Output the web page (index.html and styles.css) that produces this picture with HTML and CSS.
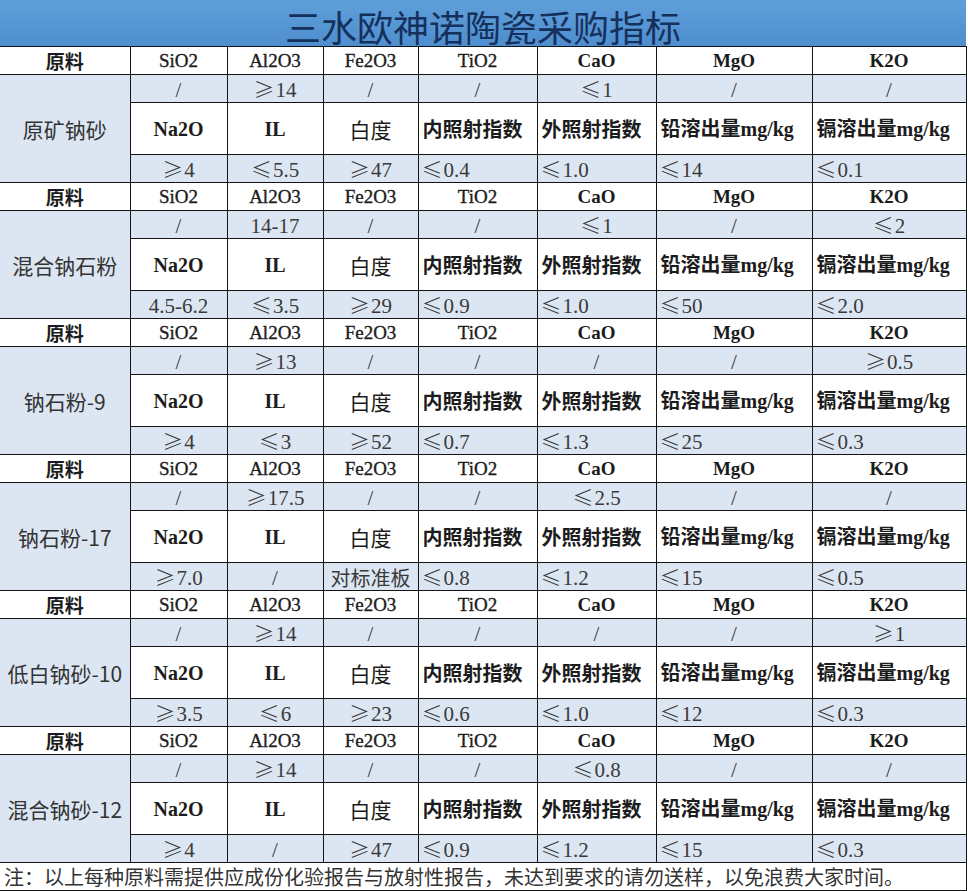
FILE: index.html
```html
<!DOCTYPE html>
<html lang="zh-CN">
<head>
<meta charset="utf-8">
<title>三水欧神诺陶瓷采购指标</title>
<link rel="stylesheet" href="styles.css">
</head>
<body>
<div class="sheet">
  <div class="title">三水欧神诺陶瓷采购指标</div>
  <table class="grid">
    <colgroup>
      <col class="c-name"><col class="c1"><col class="c2"><col class="c3"><col class="c4"><col class="c5"><col class="c6"><col class="c7">
    </colgroup>
    <tbody>
      <!-- block 1 -->
      <tr class="hd"><td class="cjk">原料</td><td>SiO2</td><td>Al2O3</td><td>Fe2O3</td><td>TiO2</td><td class="tb">CaO</td><td class="tb">MgO</td><td class="tb">K2O</td></tr>
      <tr class="sl"><td class="name" rowspan="3">原矿钠砂</td><td>/</td><td><span class="sg">≥</span>14</td><td>/</td><td>/</td><td><span class="sg">≤</span>1</td><td>/</td><td>/</td></tr>
      <tr class="lb"><td class="en">Na2O</td><td class="en">IL</td><td class="wd">白度</td><td class="bd">内照射指数</td><td class="bd">外照射指数</td><td class="bd">铅溶出量<span class="en">mg/kg</span></td><td class="bd">镉溶出量<span class="en">mg/kg</span></td></tr>
      <tr class="vl"><td><span class="sg">≥</span>4</td><td><span class="sg">≤</span>5.5</td><td><span class="sg">≥</span>47</td><td class="l"><span class="sg">≤</span>0.4</td><td class="l"><span class="sg">≤</span>1.0</td><td class="l"><span class="sg">≤</span>14</td><td class="l"><span class="sg">≤</span>0.1</td></tr>
      <!-- block 2 -->
      <tr class="hd"><td class="cjk">原料</td><td>SiO2</td><td>Al2O3</td><td>Fe2O3</td><td>TiO2</td><td class="tb">CaO</td><td class="tb">MgO</td><td class="tb">K2O</td></tr>
      <tr class="sl"><td class="name" rowspan="3">混合钠石粉</td><td>/</td><td>14-17</td><td>/</td><td>/</td><td><span class="sg">≤</span>1</td><td>/</td><td><span class="sg">≤</span>2</td></tr>
      <tr class="lb"><td class="en">Na2O</td><td class="en">IL</td><td class="wd">白度</td><td class="bd">内照射指数</td><td class="bd">外照射指数</td><td class="bd">铅溶出量<span class="en">mg/kg</span></td><td class="bd">镉溶出量<span class="en">mg/kg</span></td></tr>
      <tr class="vl"><td>4.5-6.2</td><td><span class="sg">≤</span>3.5</td><td><span class="sg">≥</span>29</td><td class="l"><span class="sg">≤</span>0.9</td><td class="l"><span class="sg">≤</span>1.0</td><td class="l"><span class="sg">≤</span>50</td><td class="l"><span class="sg">≤</span>2.0</td></tr>
      <!-- block 3 -->
      <tr class="hd"><td class="cjk">原料</td><td>SiO2</td><td>Al2O3</td><td>Fe2O3</td><td>TiO2</td><td class="tb">CaO</td><td class="tb">MgO</td><td class="tb">K2O</td></tr>
      <tr class="sl"><td class="name" rowspan="3">钠石粉-9</td><td>/</td><td><span class="sg">≥</span>13</td><td>/</td><td>/</td><td>/</td><td>/</td><td><span class="sg">≥</span>0.5</td></tr>
      <tr class="lb"><td class="en">Na2O</td><td class="en">IL</td><td class="wd">白度</td><td class="bd">内照射指数</td><td class="bd">外照射指数</td><td class="bd">铅溶出量<span class="en">mg/kg</span></td><td class="bd">镉溶出量<span class="en">mg/kg</span></td></tr>
      <tr class="vl"><td><span class="sg">≥</span>4</td><td><span class="sg">≤</span>3</td><td><span class="sg">≥</span>52</td><td class="l"><span class="sg">≤</span>0.7</td><td class="l"><span class="sg">≤</span>1.3</td><td class="l"><span class="sg">≤</span>25</td><td class="l"><span class="sg">≤</span>0.3</td></tr>
      <!-- block 4 -->
      <tr class="hd"><td class="cjk">原料</td><td>SiO2</td><td>Al2O3</td><td>Fe2O3</td><td>TiO2</td><td class="tb">CaO</td><td class="tb">MgO</td><td class="tb">K2O</td></tr>
      <tr class="sl"><td class="name" rowspan="3">钠石粉-17</td><td>/</td><td><span class="sg">≥</span>17.5</td><td>/</td><td>/</td><td><span class="sg">≤</span>2.5</td><td>/</td><td>/</td></tr>
      <tr class="lb"><td class="en">Na2O</td><td class="en">IL</td><td class="wd">白度</td><td class="bd">内照射指数</td><td class="bd">外照射指数</td><td class="bd">铅溶出量<span class="en">mg/kg</span></td><td class="bd">镉溶出量<span class="en">mg/kg</span></td></tr>
      <tr class="vl"><td><span class="sg">≥</span>7.0</td><td>/</td><td class="cj">对标准板</td><td class="l"><span class="sg">≤</span>0.8</td><td class="l"><span class="sg">≤</span>1.2</td><td class="l"><span class="sg">≤</span>15</td><td class="l"><span class="sg">≤</span>0.5</td></tr>
      <!-- block 5 -->
      <tr class="hd"><td class="cjk">原料</td><td>SiO2</td><td>Al2O3</td><td>Fe2O3</td><td>TiO2</td><td class="tb">CaO</td><td class="tb">MgO</td><td class="tb">K2O</td></tr>
      <tr class="sl"><td class="name" rowspan="3">低白钠砂-10</td><td>/</td><td><span class="sg">≥</span>14</td><td>/</td><td>/</td><td>/</td><td>/</td><td><span class="sg">≥</span>1</td></tr>
      <tr class="lb"><td class="en">Na2O</td><td class="en">IL</td><td class="wd">白度</td><td class="bd">内照射指数</td><td class="bd">外照射指数</td><td class="bd">铅溶出量<span class="en">mg/kg</span></td><td class="bd">镉溶出量<span class="en">mg/kg</span></td></tr>
      <tr class="vl"><td><span class="sg">≥</span>3.5</td><td><span class="sg">≤</span>6</td><td><span class="sg">≥</span>23</td><td class="l"><span class="sg">≤</span>0.6</td><td class="l"><span class="sg">≤</span>1.0</td><td class="l"><span class="sg">≤</span>12</td><td class="l"><span class="sg">≤</span>0.3</td></tr>
      <!-- block 6 -->
      <tr class="hd"><td class="cjk">原料</td><td>SiO2</td><td>Al2O3</td><td>Fe2O3</td><td>TiO2</td><td class="tb">CaO</td><td class="tb">MgO</td><td class="tb">K2O</td></tr>
      <tr class="sl"><td class="name" rowspan="3">混合钠砂-12</td><td>/</td><td><span class="sg">≥</span>14</td><td>/</td><td>/</td><td><span class="sg">≤</span>0.8</td><td>/</td><td>/</td></tr>
      <tr class="lb"><td class="en">Na2O</td><td class="en">IL</td><td class="wd">白度</td><td class="bd">内照射指数</td><td class="bd">外照射指数</td><td class="bd">铅溶出量<span class="en">mg/kg</span></td><td class="bd">镉溶出量<span class="en">mg/kg</span></td></tr>
      <tr class="vl"><td><span class="sg">≥</span>4</td><td>/</td><td><span class="sg">≥</span>47</td><td class="l"><span class="sg">≤</span>0.9</td><td class="l"><span class="sg">≤</span>1.2</td><td class="l"><span class="sg">≤</span>15</td><td class="l"><span class="sg">≤</span>0.3</td></tr>
      <!-- note -->
      <tr class="nt"><td colspan="8">注：以上每种原料需提供应成份化验报告与放射性报告，未达到要求的请勿送样，以免浪费大家时间。</td></tr>
    </tbody>
  </table>
</div>
</body>
</html>
```

FILE: styles.css
```css
html, body {
  margin: 0;
  padding: 0;
  background: #ffffff;
}

.sheet {
  width: 966px;
}

.title {
  height: 46px;
  box-sizing: border-box;
  padding-top: 8px;
  background: linear-gradient(#5f9fd9, #4e8ecf);
  color: #16305c;
  font-family: "Noto Sans CJK SC", sans-serif;
  font-size: 36px;
  line-height: 36px;
  text-align: center;
}

.grid {
  width: 966px;
  table-layout: fixed;
  border-collapse: collapse;
}

.c-name { width: 130px; }
.c1 { width: 97px; }
.c2 { width: 96px; }
.c3 { width: 95px; }
.c4 { width: 119px; }
.c5 { width: 119px; }
.c6 { width: 156px; }
.c7 { width: 154px; }

.grid td {
  border: 1px solid #141414;
  padding: 0;
  text-align: center;
  white-space: nowrap;
  overflow: hidden;
  color: #1c1c1c;
  font-family: "Liberation Serif", "Noto Sans CJK SC", serif;
}

.grid tr > td:first-child {
  border-left: none;
}

/* header rows */
.hd td {
  height: 27px;
  background: #ffffff;
  font-size: 19px;
  line-height: 22px;
  -webkit-text-stroke: 0.35px #1c1c1c;
}

.hd td.cjk {
  font-family: "Noto Sans CJK SC", sans-serif;
  font-weight: 700;
  font-size: 19px;
  -webkit-text-stroke: 0;
}

.hd td.tb {
  font-weight: 700;
  font-size: 19px;
  -webkit-text-stroke: 0;
}

/* light blue rows */
.sl td,
.vl td {
  height: 27px;
  background: #dce6f2;
  color: #3a3a3a;
  font-size: 21px;
  line-height: 24px;
  vertical-align: bottom;
}

.sl td.name {
  background: #dce6f2;
  vertical-align: middle;
  color: #333333;
  font-family: "Noto Sans CJK SC", sans-serif;
  font-size: 21px;
  line-height: 26px;
}

.vl td.l {
  text-align: left;
  padding-left: 3px;
}

.vl td.cj {
  font-family: "Noto Sans CJK SC", sans-serif;
  font-size: 20px;
}

.sg {
  font-family: "Noto Sans CJK SC", sans-serif;
  font-weight: 300;
  margin-right: 1px;
}

/* label rows */
.lb td {
  height: 51px;
  background: #ffffff;
  font-size: 20px;
  line-height: 26px;
}

.lb td.en {
  font-weight: 700;
}

.lb td.wd {
  font-family: "Noto Sans CJK SC", sans-serif;
  font-size: 21px;
}

.lb td.bd {
  font-family: "Noto Sans CJK SC", sans-serif;
  font-weight: 700;
  font-size: 20px;
  text-align: left;
  padding-left: 4px;
}

.lb td.bd .en {
  font-family: "Liberation Serif", serif;
  font-weight: 700;
}

/* note row */
.nt td {
  height: 27px;
  text-align: left;
  padding-left: 4px;
  background: #ffffff;
  color: #333333;
  font-family: "Noto Sans CJK SC", sans-serif;
  font-size: 20px;
  line-height: 26px;
}
```
